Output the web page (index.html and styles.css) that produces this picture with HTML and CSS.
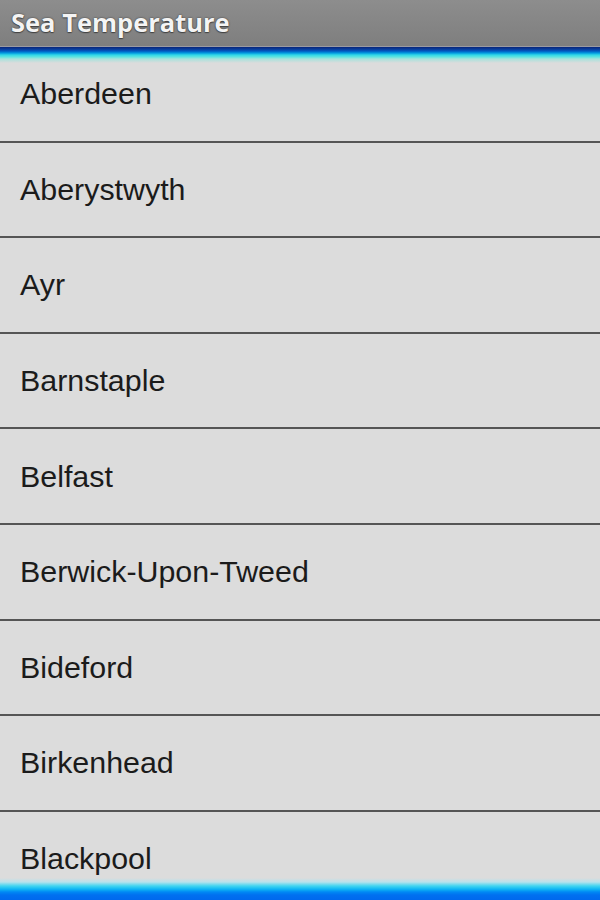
FILE: index.html
```html
<!DOCTYPE html>
<html>
<head>
<meta charset="utf-8">
<link rel="stylesheet" href="styles.css">
</head>
<body>
<div class="app">
  <header class="titlebar"><span class="title">Sea Temperature</span></header>
  <ul class="list">
    <li class="row">Aberdeen</li>
    <li class="row">Aberystwyth</li>
    <li class="row">Ayr</li>
    <li class="row">Barnstaple</li>
    <li class="row">Belfast</li>
    <li class="row">Berwick-Upon-Tweed</li>
    <li class="row">Bideford</li>
    <li class="row">Birkenhead</li>
    <li class="row">Blackpool</li>
  </ul>
  <div class="bottom-glow"></div>
</div>
</body>
</html>
```

FILE: styles.css
```css
html, body {
  margin: 0;
  padding: 0;
  height: 900px;
  overflow: hidden;
  background: #dcdcdc;
}
.app {
  position: relative;
  width: 600px;
  height: 900px;
  overflow: hidden;
  display: flex;
  flex-direction: column;
}
.titlebar {
  height: 47px;
  flex: none;
  background: linear-gradient(to bottom, #8d8d8d 0%, #7e7e7e 100%);
  display: flex;
  align-items: center;
  padding-left: 11px;
  box-sizing: border-box;
}
.title {
  font-family: "Open Sans", "Noto Sans", sans-serif;
  font-weight: 700;
  font-size: 25.5px;
  color: #f4f4f4;
  text-shadow: 0 0 2px rgba(0,0,0,0.6), 0 1px 1px rgba(0,0,0,0.4);
  margin-top: -4px;
}
.list {
  position: relative;
  list-style: none;
  margin: 0;
  padding: 0;
  background: #dcdcdc;
}
.list::before {
  content: "";
  position: absolute;
  left: 0;
  right: 0;
  top: -1px;
  height: 18px;
  background: linear-gradient(to bottom,
    #9a9aa2 0px, #9a9aa2 1px,
    #08267a 1px, #0a3a98 3px, #0058c0 5px, #0098e0 7px,
    #30d8e8 9px, #60e4e0 11px, #a8e2dc 13px, #dcdcdc 17px);
}
.row {
  height: 93.6px;
  border-bottom: 2px solid #555555;
  display: flex;
  align-items: center;
  padding-left: 20px;
  font-family: "Liberation Sans", Arial, sans-serif;
  font-size: 30.4px;
  color: #1b1b1b;
}
.bottom-glow {
  position: absolute;
  left: 0;
  right: 0;
  bottom: 0;
  height: 22px;
  background: linear-gradient(to bottom,
    rgba(220,220,220,0) 0px, #b8e2ec 4px, #40d4f0 8px,
    #10b8f4 11px, #0088f4 14px, #0070f0 17px, #0068ee 22px);
}
```
